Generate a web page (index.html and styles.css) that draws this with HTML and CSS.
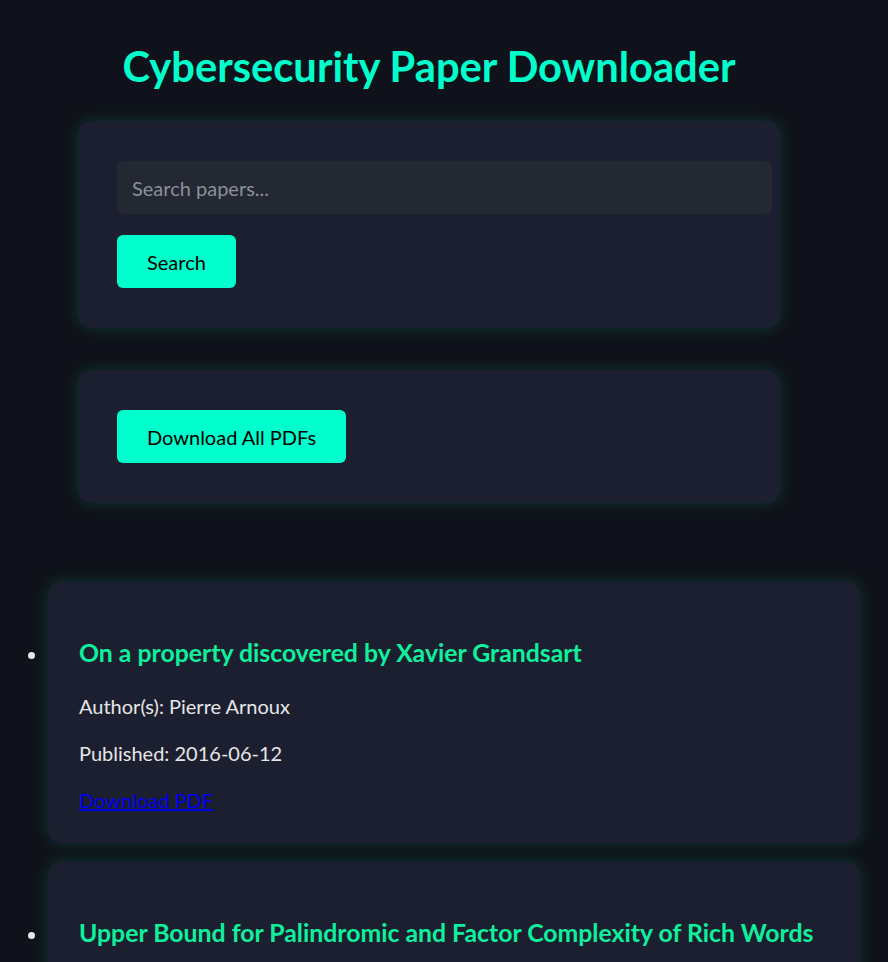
FILE: index.html
```
<!DOCTYPE html>
<html lang="en">
<head>
<meta charset="utf-8">
<title>Cybersecurity Paper Downloader</title>
<link rel="stylesheet" href="styles.css">
</head>
<body>
<div class="wrap">
  <h1 class="title">Cybersecurity Paper Downloader</h1>
  <div class="panel">
    <input class="search-input" type="text" placeholder="Search papers...">
    <button class="btn">Search</button>
  </div>
  <div class="panel">
    <button class="btn">Download All PDFs</button>
  </div>
</div>
<ul class="papers">
  <li class="paper">
    <h3 class="paper-title">On a property discovered by Xavier Grandsart</h3>
    <p class="meta">Author(s): Pierre Arnoux</p>
    <p class="meta">Published: 2016-06-12</p>
    <a class="pdf" href="#">Download PDF</a>
  </li>
  <li class="paper">
    <h3 class="paper-title">Upper Bound for Palindromic and Factor Complexity of Rich Words</h3>
    <p class="meta">Author(s): Josef Rukavicka</p>
    <p class="meta">Published: 2018-10-30</p>
    <a class="pdf" href="#">Download PDF</a>
  </li>
</ul>
</body>
</html>
```
FILE: styles.css
```
html, body {
  background: #0f121a;
}
body {
  margin: 0;
  padding: 0 28px;
  font-family: Lato, "Liberation Sans", sans-serif;
  color: #e6e6e6;
}
.wrap {
  width: 702px;
  margin-left: 50px;
}
.title {
  margin: 41px 0 30px;
  font-size: 41.7px;
  font-weight: bold;
  color: #00ffcc;
  text-align: center;
}
.panel {
  background: #1c1f30;
  border-radius: 14px;
  padding: 40px 40px 40px 39px;
  margin-bottom: 42px;
  box-shadow: 0 0 16px rgba(0, 255, 160, 0.16);
}
.search-input {
  display: block;
  width: calc(100% + 32px);
  height: 53px;
  padding: 0 15px;
  margin: 0 0 21px;
  border: none;
  border-radius: 6px;
  background: #242833;
  color: #e6e6e6;
  font-family: inherit;
  font-size: 20px;
  outline: none;
  box-sizing: border-box;
}
.search-input::placeholder {
  color: #8b909a;
}
.btn {
  display: block;
  height: 53px;
  padding: 0 30px;
  border: none;
  border-radius: 6px;
  background: #00ffcc;
  color: #000;
  font-family: inherit;
  font-size: 20px;
  cursor: pointer;
}
.papers {
  margin: 79px 0 0;
  padding: 0 0 0 20px;
}
.paper {
  background: #1c1f30;
  border-radius: 14px;
  padding: 30px 31px 28px;
  margin-bottom: 19px;
  box-shadow: 0 0 16px rgba(0, 255, 160, 0.16);
  font-size: 20px;
  line-height: 29px;
}
.paper-title {
  margin: 26px 0 24px;
  font-size: 24.8px;
  line-height: 30px;
  color: #0ff09c;
}
.meta {
  margin: 18px 0;
}
.pdf {
  color: #0000ee;
}
```
